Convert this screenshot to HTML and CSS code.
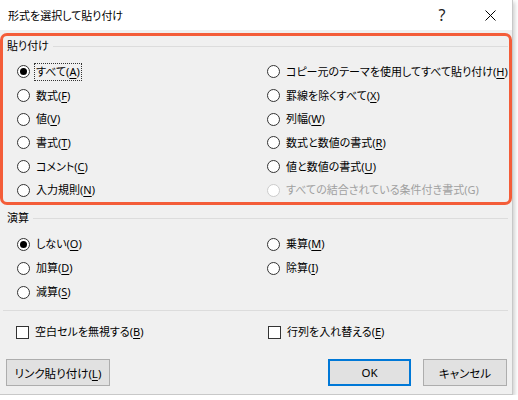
FILE: index.html
```html
<!DOCTYPE html>
<html lang="ja">
<head>
    <meta charset="UTF-8">
    <title>形式を選択して貼り付け</title>
    <link rel="stylesheet" href="styles.css">
</head>
<body>
    <div class="dialog">
        <div class="titlebar">
            <span class="title">形式を選択して貼り付け</span>
            <span class="help">?</span>
            <span class="close">
                <svg width="11" height="11" viewBox="0 0 11 11"><path d="M0.5 0.5L10.5 10.5M10.5 0.5L0.5 10.5" stroke="#000" stroke-width="1" fill="none"/></svg>
            </span>
        </div>

        <div class="highlight">
            <div class="group-label"><span>貼り付け</span></div>
            <div class="options paste">
                <label class="opt"><span class="radio checked"></span><span class="text focus">すべて(<u>A</u>)</span></label>
                <label class="opt"><span class="radio"></span><span class="text">コピー元のテーマを使用してすべて貼り付け(<u>H</u>)</span></label>
                <label class="opt"><span class="radio"></span><span class="text">数式(<u>F</u>)</span></label>
                <label class="opt"><span class="radio"></span><span class="text">罫線を除くすべて(<u>X</u>)</span></label>
                <label class="opt"><span class="radio"></span><span class="text">値(<u>V</u>)</span></label>
                <label class="opt"><span class="radio"></span><span class="text">列幅(<u>W</u>)</span></label>
                <label class="opt"><span class="radio"></span><span class="text">書式(<u>T</u>)</span></label>
                <label class="opt"><span class="radio"></span><span class="text">数式と数値の書式(<u>R</u>)</span></label>
                <label class="opt"><span class="radio"></span><span class="text">コメント(<u>C</u>)</span></label>
                <label class="opt"><span class="radio"></span><span class="text">値と数値の書式(<u>U</u>)</span></label>
                <label class="opt"><span class="radio"></span><span class="text">入力規則(<u>N</u>)</span></label>
                <label class="opt disabled"><span class="radio"></span><span class="text">すべての結合されている条件付き書式(G)</span></label>
            </div>
        </div>

        <div class="group-label ops-label"><span>演算</span></div>
        <div class="options ops">
            <label class="opt"><span class="radio checked"></span><span class="text">しない(<u>O</u>)</span></label>
            <label class="opt"><span class="radio"></span><span class="text">乗算(<u>M</u>)</span></label>
            <label class="opt"><span class="radio"></span><span class="text">加算(<u>D</u>)</span></label>
            <label class="opt"><span class="radio"></span><span class="text">除算(<u>I</u>)</span></label>
            <label class="opt"><span class="radio"></span><span class="text">減算(<u>S</u>)</span></label>
        </div>

        <div class="separator"></div>

        <div class="options checks">
            <label class="opt"><span class="checkbox"></span><span class="text">空白セルを無視する(<u>B</u>)</span></label>
            <label class="opt"><span class="checkbox"></span><span class="text">行列を入れ替える(<u>E</u>)</span></label>
        </div>

        <div class="buttons">
            <button class="btn link">リンク貼り付け(<u>L</u>)</button>
            <span class="spacer"></span>
            <button class="btn default">OK</button>
            <button class="btn">キャンセル</button>
        </div>
    </div>
</body>
</html>
```

FILE: styles.css
```css
body {
    margin: 0;
    background-color: #fff;
    font-family: "Noto Sans", "Noto Sans CJK JP", sans-serif;
    font-size: 11px;
    font-feature-settings: "palt";
    color: #000;
}

.dialog {
    width: 512px;
    height: 394px;
    background-color: #f0f0f0;
    border-right: 1px solid #c8c8c8;
    border-bottom: 1px solid #c8c8c8;
    box-shadow: 2px 2px 4px rgba(0, 0, 0, 0.18);
}

.titlebar {
    height: 30px;
    background-color: #fff;
    display: flex;
    align-items: center;
}

.title {
    margin-left: 8px;
    flex: 1;
}

.help {
    font-size: 16px;
    color: #222;
    width: 12px;
    text-align: center;
    margin-right: 37px;
}

.close {
    display: flex;
    margin-right: 16px;
}

.highlight {
    margin-top: 3px;
    height: 172px;
    box-sizing: border-box;
    border: 3px solid #f45d39;
    border-radius: 7px;
    padding-top: 3px;
}

.group-label {
    display: flex;
    align-items: center;
    height: 14px;
    line-height: 14px;
    padding-left: 4px;
    padding-right: 1px;
}

.group-label::after {
    content: "";
    flex: 1;
    height: 1px;
    margin-left: 4px;
    background-color: #dcdcdc;
}

.ops-label {
    margin-top: 6px;
    padding-left: 7px;
    padding-right: 4px;
}

.options {
    display: grid;
    grid-template-columns: 250px 1fr;
}

.paste {
    margin-top: 7px;
    padding-left: 14px;
    grid-auto-rows: 23.7px;
}

.ops {
    margin-top: 7px;
    padding-left: 17px;
    grid-auto-rows: 24px;
}

.opt {
    display: flex;
    align-items: center;
    gap: 4px;
    white-space: nowrap;
}

.text {
    line-height: 16px;
    padding: 0 1px;
    border: 1px solid transparent;
}

.text.focus {
    border: 1px dotted #333;
}

.radio {
    width: 13px;
    height: 13px;
    box-sizing: border-box;
    border: 1px solid #333;
    border-radius: 50%;
    background-color: #fff;
    display: flex;
    align-items: center;
    justify-content: center;
}

.radio.checked::after {
    content: "";
    width: 7px;
    height: 7px;
    border-radius: 50%;
    background-color: #000;
}

.disabled {
    color: #a0a0a0;
}

.disabled .radio {
    border-color: #cccccc;
}

.separator {
    margin: 6px 4px 0 3px;
    height: 1px;
    background-color: #dcdcdc;
}

.checks {
    margin-top: 9px;
    padding-left: 16px;
    grid-template-columns: 252px 1fr;
    grid-auto-rows: 24px;
}

.checkbox {
    width: 13px;
    height: 13px;
    box-sizing: border-box;
    border: 1px solid #333;
    background-color: #fff;
}

.buttons {
    display: flex;
    margin-top: 15px;
    padding: 0 5px 0 6px;
}

.spacer {
    flex: 1;
}

.btn {
    height: 27px;
    font-family: inherit;
    font-size: 11.5px;
    font-feature-settings: "palt";
    color: #000;
    background-color: #e1e1e1;
    border: 1px solid #adadad;
    padding: 0;
}

.btn.link {
    width: 104px;
}

.btn.default {
    width: 83px;
    border: 2px solid #0078d7;
    margin-right: 12px;
}

.btn:last-child {
    width: 84px;
}

u {
    text-decoration-thickness: 1px;
    text-decoration-skip-ink: none;
    text-underline-offset: 2px;
}
```
